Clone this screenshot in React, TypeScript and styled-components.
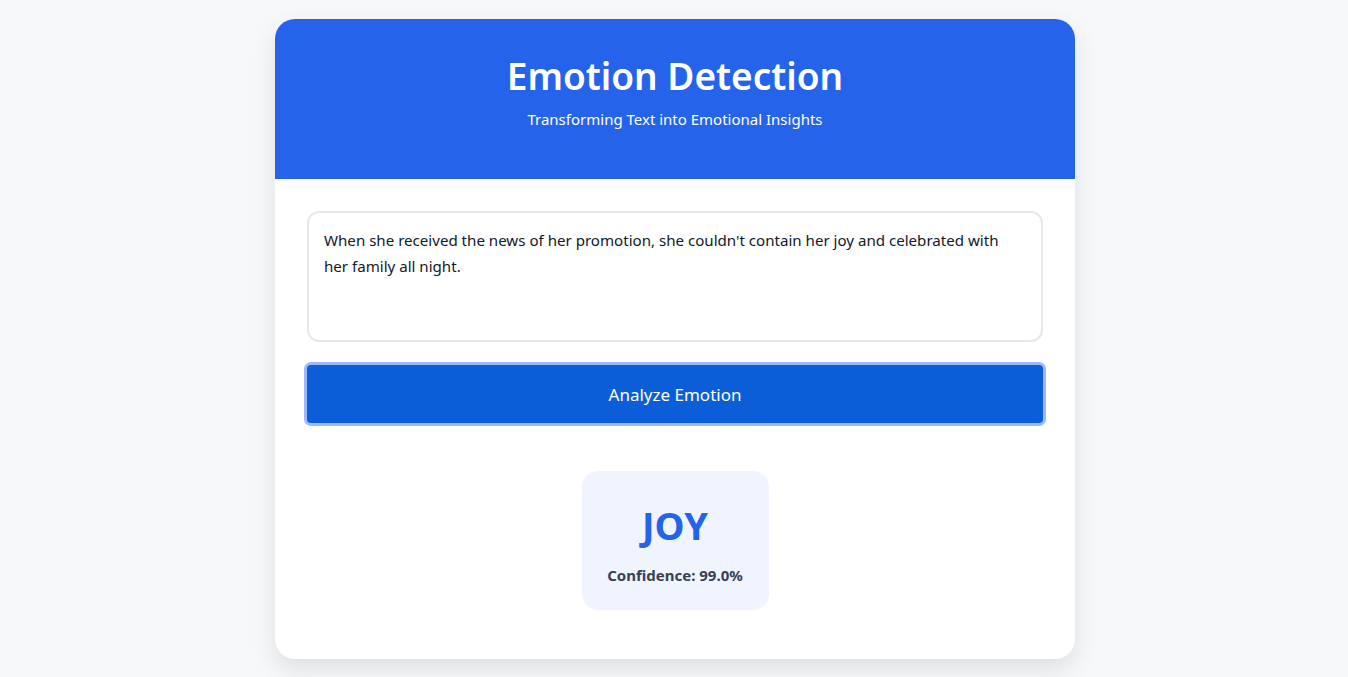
import React, { useState } from 'react';
import styled, { createGlobalStyle } from 'styled-components';

const GlobalStyle = createGlobalStyle`
  * {
    box-sizing: border-box;
  }

  body {
    margin: 0;
    background-color: #f7f8fa;
    font-family: 'Noto Sans', 'Open Sans', sans-serif;
    color: #111827;
  }
`;

const Page = styled.div`
  display: flex;
  justify-content: center;
  padding: 19px 19px 18px 21px;
`;

const Card = styled.div`
  width: 800px;
  background-color: white;
  border-radius: 20px;
  overflow: hidden;
  box-shadow: 0 10px 25px rgba(0, 0, 0, 0.1);
`;

const Header = styled.header`
  background-color: #2563eb;
  color: white;
  text-align: center;
  height: 160px;
  padding-top: 33px;

  h1 {
    margin: 0;
    font-size: 37px;
    font-weight: 600;
    line-height: 48px;
  }

  p {
    margin: 9px 0 0;
    font-size: 15px;
    line-height: 20px;
  }
`;

const Body = styled.div`
  display: flex;
  flex-direction: column;
  padding: 32px 32px 49px;
`;

const TextArea = styled.textarea`
  width: 100%;
  height: 131px;
  padding: 14px 30px 14px 15px;
  border: 2px solid #e5e7eb;
  border-radius: 12px;
  font-family: inherit;
  font-size: 15.1px;
  line-height: 26px;
  color: #111827;
  resize: none;
  outline: none;
`;

const AnalyzeButton = styled.button`
  margin-top: 23px;
  width: 100%;
  height: 58px;
  border: 0;
  border-radius: 4px;
  background-color: #0b5ed7;
  color: white;
  font-family: inherit;
  font-size: 17px;
  box-shadow: 0 0 0 3px rgba(37, 99, 235, 0.45);
  cursor: pointer;
`;

const Result = styled.div`
  align-self: center;
  margin-top: 48px;
  width: 187px;
  height: 139px;
  border-radius: 16px;
  background-color: #eff4ff;
  display: flex;
  flex-direction: column;
  align-items: center;
  padding-top: 30px;

  h2 {
    margin: 0;
    font-size: 38px;
    font-weight: 700;
    line-height: 48px;
    color: #2563eb;
  }

  span {
    margin-top: 16px;
    font-size: 15px;
    font-weight: 700;
    color: #374151;
  }
`;

const App = () => {
  const [text, setText] = useState(
    "When she received the news of her promotion, she couldn't contain her joy and celebrated with her family all night."
  );

  return (
    <>
      <GlobalStyle />
      <Page>
        <Card>
          <Header>
            <h1>Emotion Detection</h1>
            <p>Transforming Text into Emotional Insights</p>
          </Header>
          <Body>
            <TextArea value={text} onChange={(e) => setText(e.target.value)} />
            <AnalyzeButton>Analyze Emotion</AnalyzeButton>
            <Result>
              <h2>JOY</h2>
              <span>Confidence: 99.0%</span>
            </Result>
          </Body>
        </Card>
      </Page>
    </>
  );
};

export default App;
